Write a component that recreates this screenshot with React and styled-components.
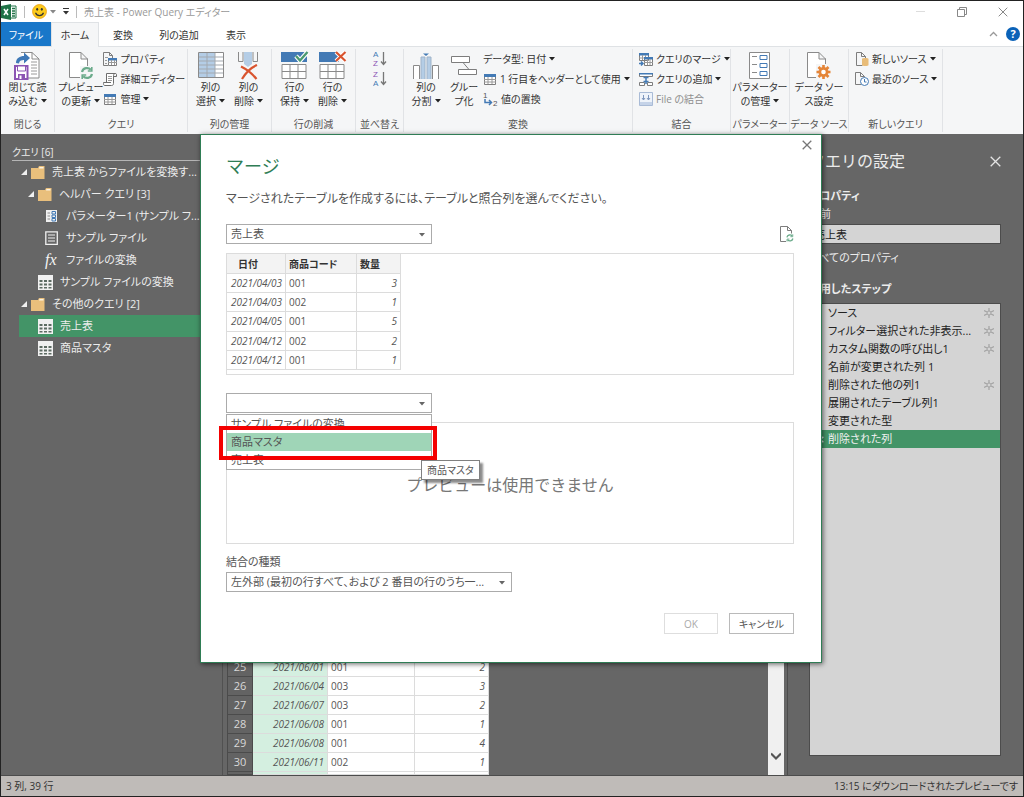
import { useState } from "react";
import styled, { createGlobalStyle } from "styled-components";

const GlobalStyle = createGlobalStyle`
  * {
    box-sizing: border-box;
  }

  body {
    margin: 0;
    font-family: "Open Sans", "Noto Sans CJK JP", sans-serif;
    font-size: 11px;
    line-height: 14px;
    font-feature-settings: "palt";
    color: #444;
  }

  button, input, select {
    font: inherit;
    font-feature-settings: inherit;
    color: inherit;
  }

  h1, h2, h3, p, ul {
    margin: 0;
    padding: 0;
    list-style: none;
  }
`;

/* ---------- data ---------- */

const tabs = ["ホーム", "変換", "列の追加", "表示"];

const queries = [
  { id: 1, level: 0, icon: "folder", open: true, name: "売上表 からファイルを変換す..." },
  { id: 2, level: 1, icon: "folder", open: true, name: "ヘルパー クエリ [3]" },
  { id: 3, level: 2, icon: "param", name: "パラメーター1 (サンプル フ..." },
  { id: 4, level: 2, icon: "file", name: "サンプル ファイル" },
  { id: 5, level: 2, icon: "fx", name: "ファイルの変換" },
  { id: 6, level: 1, icon: "table", name: "サンプル ファイルの変換" },
  { id: 7, level: 0, icon: "folder", open: true, name: "その他のクエリ [2]" },
  { id: 8, level: 1, icon: "table", name: "売上表" },
  { id: 9, level: 1, icon: "table", name: "商品マスタ" },
];

const gridRows = [
  { no: 25, date: "2021/06/01", code: "001", qty: 2 },
  { no: 26, date: "2021/06/04", code: "003", qty: 3 },
  { no: 27, date: "2021/06/07", code: "003", qty: 2 },
  { no: 28, date: "2021/06/08", code: "001", qty: 1 },
  { no: 29, date: "2021/06/08", code: "001", qty: 4 },
  { no: 30, date: "2021/06/11", code: "002", qty: 1 },
];

const previewRows = [
  { id: 1, date: "2021/04/03", code: "001", qty: 3 },
  { id: 2, date: "2021/04/03", code: "002", qty: 1 },
  { id: 3, date: "2021/04/05", code: "001", qty: 5 },
  { id: 4, date: "2021/04/12", code: "002", qty: 2 },
  { id: 5, date: "2021/04/12", code: "001", qty: 1 },
];

const steps = [
  { name: "ソース", gear: true },
  { name: "フィルター選択された非表示...", gear: true },
  { name: "カスタム関数の呼び出し1", gear: true },
  { name: "名前が変更された列 1" },
  { name: "削除された他の列1", gear: true },
  { name: "展開されたテーブル列1" },
  { name: "変更された型" },
  { name: "削除された列" },
];

const mergeTargets = ["サンプル ファイルの変換", "商品マスタ", "売上表"];

/* ---------- icons ---------- */

const Svg = styled.svg`
  display: block;
  flex: none;
  fill: none;
`;

const Icon = ({ w, h, children }) => (
  <Svg width={w} height={h} viewBox={`0 0 ${w} ${h}`} aria-hidden="true">
    {children}
  </Svg>
);

const Caret = ({ color = "#222" }) => (
  <Icon w={6} h={4}>
    <path d="M0 0h6L3 3.5z" fill={color} />
  </Icon>
);

const Cross = ({ size = 10, color = "#777", width = 1.3 }) => (
  <Icon w={size} h={size}>
    <path
      d={`M.7 .7L${size - 0.7} ${size - 0.7}M${size - 0.7} .7L.7 ${size - 0.7}`}
      stroke={color}
      strokeWidth={width}
    />
  </Icon>
);

const ExcelIcon = () => (
  <Icon w={16} h={16}>
    <path d="M9 2h6v12H9z" fill="#fff" stroke="#1f7246" />
    <path d="M11 4.500h3M11 7h3M11 9.500h3M11 12h3" stroke="#1f7246" strokeWidth="1.300" />
    <path d="M0 2l10-2v16L0 14z" fill="#1f7246" />
    <path d="M3 5l4 6M7 5l-4 6" stroke="#fff" strokeWidth="1.500" />
  </Icon>
);

const SmileIcon = () => (
  <Icon w={15} h={15}>
    <circle cx="7.500" cy="7.500" r="6.900" fill="#fccb1b" stroke="#eda71c" />
    <ellipse cx="5.200" cy="5.300" rx="1" ry="1.400" fill="#333" />
    <ellipse cx="9.800" cy="5.300" rx="1" ry="1.400" fill="#333" />
    <path d="M3.500 8.800c1.500 3.800 6.500 3.800 8 0" stroke="#333" strokeWidth="1.200" />
  </Icon>
);

const Page = ({ w = 18, h = 25, fold = 7 }) => (
  <path
    d={`M.5 .5H${w - fold}L${w - 0.5} ${fold}V${h - 0.5}H.5zM${w - fold} .5V${fold}H${w}`}
    fill="#fff"
    stroke="#8a8a8a"
  />
);

const Refresh = () => (
  <g stroke="#6bab8b" strokeWidth="2.200">
    <path d="M1.500 5.500C2.500 1 8 .5 10.300 3.300M11.500 7.500C10.500 12 5 12.500 2.700 9.700" />
    <path d="M11.300 .5v4h-4M1.700 12.500v-4h4" strokeWidth="1.600" />
  </g>
);

const CloseLoadIcon = () => (
  <Icon w={26} h={29}>
    <path d="M7 1.500h11l7 6.500v19H14" fill="#fff" stroke="#8a8a8a" />
    <path d="M18 1.500V8h7" stroke="#8a8a8a" />
    <path d="M17 11h6M17 14h6M17 17h6M17 20h6M17 23h6" stroke="#9a9a9a" />
    <path d="M2 12c0-5 4-7 8-7V1.500l6 5.500-6 5.500V9C7 9 5 10 5 12.500z" fill="#3f79b7" />
    <path d="M1 15h12.500v13H1z" fill="#fff" stroke="#8b54b3" strokeWidth="2" />
    <path d="M3.500 15h8v5h-8z" fill="#fff" stroke="#8b54b3" />
    <path d="M4 23h7v5H4z" fill="#8b54b3" />
    <path d="M5.500 24.500h2V28h-2z" fill="#fff" />
  </Icon>
);

const RefreshPreviewIcon = () => (
  <Icon w={26} h={29}>
    <g transform="translate(1 1)">
      <Page w={19} h={26} />
    </g>
    <path d="M12 15h14v14H12z" fill="#f5f6f7" />
    <g transform="translate(12.500 15.500)">
      <Refresh />
    </g>
  </Icon>
);

const ChooseColumnsIcon = () => (
  <Icon w={26} h={29}>
    <path d="M1 2h24v24H1z" fill="#fff" />
    <path d="M1 2h16v24H1z" fill="#b4cde6" />
    <path d="M1 6h24M1 10h24M1 14h24M1 18h24M1 22h24M9 2v24M17 2v24" stroke="#a3a9b0" />
    <path d="M.5 1.500h25v25H.5z" stroke="#8a8a8a" />
  </Icon>
);

const RemoveColumnsIcon = () => (
  <Icon w={24} h={29}>
    <path d="M1.500 1v9.500H6V1M20.500 1v9.500H16V1" stroke="#8a8a8a" />
    <path d="M7 1h8v12l-4 3-4-3z" fill="#b4cde6" />
    <path d="M4 15.500c6 3 12 8 15.500 12.500M20 14C13 17 8 23 5 28" stroke="#d9542f" strokeWidth="2.200" />
  </Icon>
);

const RowGrid = () => (
  <g>
    <path d="M0 1h26v10H0z" fill="#437ab5" />
    <path d="M1 13.500h24v14H1z" fill="#fff" stroke="#8a8a8a" />
    <path d="M1 20.500h24M9 13.500v14M17 13.500v14" stroke="#8a8a8a" />
  </g>
);

const KeepRowsIcon = () => (
  <Icon w={28} h={29}>
    <RowGrid />
    <path d="M15 5l4 4.500L26.500 1" stroke="#fff" strokeWidth="4.500" />
    <path d="M15 5l4 4.500L26.500 1" stroke="#4b9a71" strokeWidth="2.400" />
  </Icon>
);

const RemoveRowsIcon = () => (
  <Icon w={28} h={29}>
    <RowGrid />
    <path d="M20 1h7v10h-7z" fill="#f5f6f7" />
    <path d="M17 1l9.500 9M26.500 1L17 10" stroke="#fff" strokeWidth="4" />
    <path d="M17 1l9.500 9M26.500 1L17 10" stroke="#d9542f" strokeWidth="2.200" />
  </Icon>
);

const Letter = styled.text`
  font: 8px "Liberation Sans", sans-serif;
  fill: ${(props) => props.$color};
`;

const SortIcon = ({ top, bottom }) => (
  <Icon w={14} h={20}>
    <Letter x="0" y="8" $color={top === "A" ? "#437ab5" : "#8b54b3"}>{top}</Letter>
    <Letter x="0" y="17" $color={bottom === "A" ? "#437ab5" : "#8b54b3"}>{bottom}</Letter>
    <path d="M10.500 3v12.500M8 12.500l2.500 3 2.500-3" stroke="#777" strokeWidth="1.300" />
  </Icon>
);

const SplitIcon = () => (
  <Icon w={26} h={29}>
    <path d="M.5 28V14.500h6V28M19.500 28V14.500h6V28" fill="#fff" stroke="#8a8a8a" />
    <path d="M8 28V6h4v22M14 28V6h4v22" fill="#b4cde6" stroke="#9fb3c8" />
    <path d="M10 2.500h6L13 5z" fill="#437ab5" />
  </Icon>
);

const GroupIcon = () => (
  <Icon w={26} h={29}>
    <path d="M.5 5.500h18v6H.5zM7.500 18.500h18v5h-18z" fill="#fff" stroke="#7d7d7d" />
    <path d="M12 11.500l6 7" stroke="#7d7d7d" />
  </Icon>
);

const ParamsIcon = () => (
  <Icon w={22} h={29}>
    <path d="M.5 1.500h20v26H.5z" fill="#fff" stroke="#8a8a8a" />
    <path d="M11 4.500h7v4h-7zM11 12.500h7v4h-7zM11 20.500h7v4h-7z" stroke="#437ab5" />
    <path d="M3 5.500h5M3 13.500h5M3 21.500h5" stroke="#8a8a8a" />
  </Icon>
);

const Gear = ({ color, hole = "#fff" }) => (
  <g stroke={color}>
    <path d="M7 0v14M0 7h14M2 2l10 10M12 2L2 12" strokeWidth="2.600" />
    <circle cx="7" cy="7" r="4.500" fill={color} />
    <circle cx="7" cy="7" r="2.300" fill={hole} stroke="none" />
  </g>
);

const SourceSettingsIcon = () => (
  <Icon w={24} h={29}>
    <g transform="translate(0 1)">
      <Page w={19} h={26} />
    </g>
    <path d="M9 13h15v16H9z" fill="#f5f6f7" />
    <g transform="translate(9.500 14)">
      <Gear color="#e58538" />
    </g>
  </Icon>
);

const PropertiesIcon = () => (
  <Icon w={14} h={14}>
    <path d="M.5 .5h6l3 3v3M.5 .5v13H5M6.500 .5v3h3" stroke="#7d7d7d" />
    <path d="M2 5.500h3M2 8.500h2M2 11.500h2" stroke="#9a9a9a" />
    <path d="M5.500 6.500h8v7h-8z" fill="#fff" stroke="#7d7d7d" />
    <path d="M5 6h9v2.500H5z" fill="#437ab5" />
    <path d="M5 10.500h9M8.500 8v5M11.500 8v5" stroke="#9a9a9a" />
  </Icon>
);

const EditorIcon = () => (
  <Icon w={14} h={14}>
    <path d="M3.500 10.500v-9h9c-1.500 0-2 1-2 2v8c0 1.500-1 2-2 2h-7c-1 0-1-2-1-3h7.500" fill="#fff" stroke="#6d6d6d" />
    <path d="M10.500 4.500h3v-2c0-1-1-1-1-1" stroke="#6d6d6d" />
    <path d="M5 4.500h4M5 6.500h4M5 8.500h4" stroke="#9a9a9a" />
  </Icon>
);

const SmallTableIcon = () => (
  <Icon w={14} h={14}>
    <path d="M1.500 2.500h11v10h-11z" fill="#fff" stroke="#7d7d7d" />
    <path d="M1 2h12v3H1z" fill="#437ab5" />
    <path d="M1 7.500h12M1 10h12M5 5v7M9 5v7" stroke="#9a9a9a" />
  </Icon>
);

const ReplaceIcon = () => (
  <Icon w={15} h={18}>
    <Letter x="0" y="8" $color="#555">1</Letter>
    <path d="M2 9v3.500h6M6 10l2.500 2.500L6 15" stroke="#437ab5" strokeWidth="1.500" />
    <Letter x="10" y="16" $color="#555">2</Letter>
  </Icon>
);

const MergeIcon = () => (
  <Icon w={14} h={14}>
    <path d="M.5 1.500h9v7h-9zM5.500 5.500h8v8h-8z" fill="#fff" stroke="#7d7d7d" />
    <path d="M0 1h10v2.500H0zM5 5h9v2.500H5z" fill="#437ab5" />
    <path d="M3.500 3v5M6.500 3v2M0 6h5M8.500 7v6M11 7v6M5 10.500h9" stroke="#9a9a9a" />
    <path d="M0 11.500h3.500M2 9.500l2 2-2 2" stroke="#437ab5" strokeWidth="1.500" />
  </Icon>
);

const AppendIcon = () => (
  <Icon w={14} h={14}>
    <path d="M.5 1.500h13v3H.5zM.5 10.500h5v3h-5zM8.500 10.500h5v3h-5z" fill="#fff" stroke="#7d7d7d" />
    <path d="M0 1h14v1.500H0z" fill="#437ab5" />
    <path d="M7 5v7M4.500 5.500h5M4.500 9.500h5" stroke="#437ab5" strokeWidth="1.500" />
  </Icon>
);

const CombineIcon = () => (
  <Icon w={14} h={14}>
    <path d="M.5 .5h13v13H.5z" fill="#eef3fa" stroke="#a9bbd6" />
    <path d="M4.500 3v5M9.500 3v5M3 6l1.500 2L6 6M8 6l1.500 2L11 6" stroke="#7f97bd" />
    <path d="M1 10h12v3H1z" fill="#c5d3e8" />
  </Icon>
);

const NewSourceIcon = () => (
  <Icon w={14} h={14}>
    <path d="M7.500 13.500h-6V.5h5l4 4v2M6.500 .5v4h4" stroke="#7d7d7d" />
    <path d="M7 7c0-1.300 6.500-1.300 6.500 0v6c0 1.300-6.500 1.300-6.500 0z" fill="#e8bc78" />
  </Icon>
);

const RecentSourceIcon = () => (
  <Icon w={14} h={14}>
    <path d="M6 12.500H.5V.5h5l4 4v1M5.500 .5v4h4" stroke="#7d7d7d" />
    <circle cx="9.500" cy="9.500" r="4" fill="#fff" stroke="#437ab5" />
    <path d="M9.500 7v3h2" stroke="#437ab5" />
  </Icon>
);

const FolderIcon = () => (
  <Icon w={14} h={13}>
    <path d="M0 2h7l1-2h5.500v13H0z" fill="#e9bf7c" />
    <path d="M8.500 1h4v1.500H8z" fill="#fdf3e0" />
  </Icon>
);

const TreeTableIcon = () => (
  <Icon w={15} h={15}>
    <path d="M0 0h15v15H0z" fill="#f0f0f0" />
    <path d="M1.500 5h3v2h-3zM6 5h3v2H6zM10.500 5h3v2h-3zM1.500 8.500h3v2h-3zM6 8.500h3v2H6zM10.500 8.500h3v2h-3zM1.500 12h3v1.500h-3zM6 12h3v1.500H6zM10.500 12h3v1.500h-3z" fill="#5c6b62" />
  </Icon>
);

const TreeParamIcon = () => (
  <Icon w={14} h={14}>
    <path d="M1 1h11v12H1z" fill="#f0f0f0" />
    <path d="M7 2.500h3.500V5H7zM7 6h3.500v2.500H7zM7 9.500h3.500V12H7z" stroke="#437ab5" />
    <path d="M2.500 4h2.500M2.500 7h2.500M2.500 10h2.500" stroke="#8a8a8a" />
  </Icon>
);

const TreeFileIcon = () => (
  <Icon w={14} h={14}>
    <path d="M.8 .8h11.500v12.500H.8z" stroke="#f0f0f0" strokeWidth="1.300" />
    <path d="M3 4h7M3 7h7M3 10h7" stroke="#f0f0f0" />
  </Icon>
);

const Fx = styled.span`
  width: 14px;
  flex: none;
  font: italic 16px/16px "Liberation Serif", serif;
  color: #f4f4f4;
`;

const treeIcons = {
  folder: <FolderIcon />,
  table: <TreeTableIcon />,
  param: <TreeParamIcon />,
  file: <TreeFileIcon />,
  fx: <Fx>fx</Fx>,
};

const SmallGear = () => (
  <Icon w={10} h={10}>
    <path d="M5 0v3M5 7v3M0 2.500l3 1.500M7 6l3 1.500M10 2.500L7 4M3 6L0 7.500" stroke="#a3a3a3" strokeWidth="1.200" />
    <circle cx="5" cy="5" r="2" stroke="#a3a3a3" />
  </Icon>
);

/* ---------- window chrome ---------- */

const Window = styled.div`
  min-height: 100vh;
  display: flex;
  flex-direction: column;
  border: 1px solid #222;
  background-color: #fff;
`;

const TitleBar = styled.header`
  height: 21px;
  display: flex;
  align-items: center;
  gap: 7px;
  color: #999;
  font-size: 10px;
`;

const Divider = styled.span`
  width: 1px;
  height: 12px;
  background-color: #bbb;
`;

const PlainButton = styled.button`
  display: flex;
  align-items: center;
  justify-content: center;
  gap: 3px;
  padding: 0;
  border: 0;
  background: none;
  cursor: pointer;
`;

const WindowButtons = styled.div`
  margin-left: auto;
  display: flex;

  button {
    width: 41px;
    height: 20px;
  }
`;

const TabBar = styled.nav`
  height: 24px;
  display: flex;
  align-items: stretch;
  padding-right: 3px;
`;

const Tab = styled.button`
  min-width: ${(props) => props.$width}px;
  padding: 0;
  border: 1px solid transparent;
  border-bottom: 0;
  background: none;
  cursor: pointer;
  font-size: 10px;
  color: #333;

  ${(props) =>
    props.$active &&
    `
    border-color: #dfe2e5;
    background-color: #f5f6f7;
    margin-bottom: -1px;
    z-index: 1;
  `}
`;

const FileTab = styled(Tab)`
  background-color: #1977c9;
  color: #fff;
`;

const TabTools = styled.div`
  margin-left: auto;
  display: flex;
  align-items: center;
  gap: 8px;
`;

const Help = styled.button`
  width: 14px;
  height: 14px;
  padding: 0;
  border: 0;
  border-radius: 50%;
  background-color: #0b62b8;
  color: #fff;
  font-weight: bold;
  line-height: 14px;
`;

const Ribbon = styled.section`
  height: 88px;
  flex: none;
  display: flex;
  padding-top: 2px;
  background-color: #f5f6f7;
  border-top: 1px solid #dfe2e5;
`;

const Group = styled.div`
  width: ${(props) => props.$width}px;
  flex: none;
  display: flex;
  flex-direction: column;
  margin-bottom: 2px;
  border-right: 1px solid #e1e3e6;
  white-space: nowrap;
`;

const GroupBody = styled.div`
  flex: 1;
  display: flex;
  justify-content: ${(props) => (props.$start ? "flex-start" : "center")};
  padding-left: ${(props) => (props.$start ? "3px" : 0)};
`;

const GroupLabel = styled.div`
  height: 16px;
  text-align: center;
  font-size: 10px;
  line-height: 16px;
  color: #555;
`;

const BigButton = styled.button`
  min-width: 38px;
  display: flex;
  flex-direction: column;
  align-items: center;
  padding: 2px 0 0;
  border: 0;
  background: none;
  font-size: 10px;
  line-height: 14px;
  color: #333;
  cursor: pointer;
`;

const BigLabel = styled.span`
  display: flex;
  align-items: center;
  gap: 3px;
`;

const Stack = styled.div`
  display: flex;
  flex-direction: column;
  padding-left: ${(props) => props.$indent || 0}px;
`;

const SmallButton = styled(PlainButton)`
  height: 20px;
  justify-content: flex-start;
  font-size: 10px;
  color: ${(props) => (props.disabled ? "#8e8e8e" : "#333")};
`;

const Big = ({ icon, lines, menu }) => (
  <BigButton>
    {icon}
    <span>{lines[0]}</span>
    <BigLabel>
      {lines[1]}
      {menu && <Caret />}
    </BigLabel>
  </BigButton>
);

const Small = ({ icon, label, menu, disabled }) => (
  <SmallButton disabled={disabled}>
    {icon}
    {label}
    {menu && <Caret />}
  </SmallButton>
);

/* ---------- workspace ---------- */

const Workspace = styled.main`
  flex: 1;
  position: relative;
  display: flex;
  min-height: 641px;
  background-color: #666;
  border-bottom: 1px solid #4c4c4c;
`;

const QueryPane = styled.aside`
  width: 222px;
  flex: none;
  padding: 11px 0 0 11px;
  border-right: 1px solid #515151;
  color: #ececec;
  white-space: nowrap;
  overflow: hidden;
`;

const PaneHeading = styled.h2`
  height: 16px;
  font-size: 10px;
  font-weight: normal;
  line-height: 14px;
  border-bottom: 1px solid #b5b5b5;
`;

const QueryRow = styled.li`
  height: 22px;
  display: flex;
  align-items: center;
  gap: 7px;
  margin-left: 7px;
  padding-left: ${(props) => 2 + props.$level * 7}px;
  background-color: ${(props) => (props.$selected ? "#439467" : "transparent")};
  cursor: pointer;
`;

const ArrowSlot = styled.span`
  width: 10px;
  margin-right: -7px;
`;

const GridPane = styled.section`
  flex: 1;
  display: flex;
  align-items: flex-end;
  justify-content: space-between;
  margin-left: 4px;
`;

const DataTable = styled.table`
  border-collapse: separate;
  border-spacing: 0;
  table-layout: fixed;
  width: 262px;
  background-color: #fff;
  color: #555;
`;

const GridCell = styled.td`
  width: ${(props) => props.$width}px;
  height: ${(props) => (props.$stub ? 3 : 19)}px;
  padding: 0 3px;
  border-right: 1px solid #dcdcdc;
  border-bottom: 1px solid #dcdcdc;
  font-size: 10px;
  line-height: 14px;
  text-align: ${(props) => (props.$right ? "right" : "left")};
  font-style: ${(props) => (props.$right ? "italic" : "normal")};
  background-color: ${(props) => (props.$tint ? "#d4efe0" : "#fff")};
`;

const RowNumber = styled.th`
  width: 26px;
  padding: 0;
  border: 1px solid #4b4b4b;
  border-width: 0 1px 1px 1px;
  background-color: #636363;
  color: #d9d9d9;
  font-weight: normal;
  line-height: 14px;
`;

const ScrollBar = styled.div`
  width: 16px;
  align-self: stretch;
  display: flex;
  flex-direction: column;
  justify-content: flex-end;
  padding-bottom: 14px;
  margin-right: 3px;
  background-color: #f0f0f0;
`;

const SettingsPane = styled.aside`
  width: 236px;
  flex: none;
  display: flex;
  flex-direction: column;
  padding: 15px 22px 19px 21px;
  border-left: 1px solid #4c4c4c;
  color: #ececec;
`;

const SettingsHeader = styled.div`
  display: flex;
  align-items: center;
  justify-content: space-between;
  height: 24px;
  margin-bottom: 15px;

  h2 {
    font-size: 16px;
    font-weight: normal;
    font-feature-settings: normal;
    line-height: 20px;
  }
`;

const SectionTitle = styled.h3`
  font-size: 11px;
  line-height: 16px;
`;

const NameLabel = styled.label`
  height: 20px;
  line-height: 20px;
`;

const NameInput = styled.input`
  height: 20px;
  padding: 0 4px;
  border: 1px solid #4c4c4c;
  background-color: #d4d4d4;
  color: #222;
`;

const PropsLink = styled.a`
  margin: 6px 0 15px;
  line-height: 16px;
  color: inherit;
  text-decoration: none;
`;

const StepList = styled.ul`
  flex: 1;
  margin-top: 6px;
  border: 1px solid #4c4c4c;
  background-color: #d4d4d4;
  color: #222;
`;

const Step = styled.li`
  height: 18px;
  display: flex;
  align-items: center;
  padding-right: 6px;
  color: ${(props) => (props.$selected ? "#f0f0f0" : "#222")};
  background-color: ${(props) => (props.$selected ? "#439467" : "transparent")};
  white-space: nowrap;
  cursor: pointer;
`;

const StepMark = styled.span`
  width: 18px;
  padding-left: 7px;
`;

const StepName = styled.span`
  flex: 1;
`;

const StatusBar = styled.footer`
  height: 20px;
  display: flex;
  align-items: center;
  justify-content: space-between;
  padding: 0 5px;
  background-color: #bfbbb8;
  color: #333;
  font-size: 10px;
`;

/* ---------- merge dialog ---------- */

const Overlay = styled.div`
  position: absolute;
  inset: 0;
  display: flex;
  align-items: flex-start;
  justify-content: center;
  padding-right: 2px;
`;

const Dialog = styled.div`
  width: 622px;
  display: flex;
  flex-direction: column;
  padding: 3px 27px 28px 25px;
  border: 1px solid #2f7d55;
  background-color: #fff;
  box-shadow: 1px 1px 5px rgba(0, 0, 0, 0.6);
  color: #555;
`;

const DialogClose = styled(PlainButton)`
  align-self: flex-end;
  width: 14px;
  height: 14px;
  margin-right: -20px;
`;

const DialogTitle = styled.h1`
  margin-bottom: 9px;
  font-size: 18px;
  font-weight: normal;
  font-feature-settings: normal;
  line-height: 28px;
  color: #2f7d55;
`;

const DialogText = styled.p`
  margin-bottom: 15px;
  font-size: 12px;
  line-height: 20px;
`;

const FieldRow = styled.div`
  display: flex;
  align-items: center;
  justify-content: space-between;
`;

const SelectBox = styled.div`
  position: relative;
  width: ${(props) => props.$width}px;

  > svg {
    position: absolute;
    right: 7px;
    top: 9px;
    pointer-events: none;
  }
`;

const SelectField = styled.select`
  display: block;
  appearance: none;
  width: 100%;
  height: 20px;
  padding: 0 20px 0 4px;
  border: 1px solid #ababab;
  border-radius: 0;
  background-color: #fff;
  text-overflow: ellipsis;
`;

const PreviewBox = styled.div`
  height: 122px;
  display: flex;
  margin: 9px 0 ${(props) => props.$after}px;
  border: 1px solid #dcdcdc;
`;

const PreviewTable = styled(DataTable)`
  width: 174px;
  height: 116px;
`;

const PreviewHead = styled.th`
  width: ${(props) => props.$width}px;
  height: 20px;
  padding: 0 3px;
  border-right: 1px solid #dcdcdc;
  border-bottom: 1px solid #dcdcdc;
  background-color: #f3f3f3;
  text-align: left;
  font-size: 10px;
  color: #333;

  &:first-child {
    padding-left: 11px;
  }
`;

const EmptyMessage = styled.p`
  margin: auto;
  padding-top: 3px;
  font-size: 16px;
  font-feature-settings: normal;
  line-height: 20px;
  color: #777;
`;

const Options = styled.ul`
  position: absolute;
  top: 21px;
  left: 0;
  right: 0;
  border: 1px solid #ababab;
  background-color: #fff;
`;

const Option = styled.li`
  height: 18px;
  padding-left: 4px;
  line-height: 18px;
  background-color: ${(props) => (props.$active ? "#9fd5b7" : "#fff")};
`;

const Highlight = styled.div`
  position: absolute;
  top: 33px;
  left: -7px;
  right: -5px;
  height: 34px;
  border: 4px solid #f40000;
  pointer-events: none;
`;

const Tooltip = styled.div`
  position: absolute;
  top: 67px;
  left: 195px;
  padding: 2px 5px;
  border: 1px solid #808080;
  background-color: #fff;
  box-shadow: 3px 3px 2px rgba(0, 0, 0, 0.45);
  font-size: 10px;
  white-space: nowrap;
`;

const JoinLabel = styled.label`
  margin-bottom: 2px;
  line-height: 16px;
`;

const Actions = styled.div`
  display: flex;
  justify-content: flex-end;
  gap: 11px;
  margin-top: 21px;
`;

const ActionButton = styled.button`
  width: ${(props) => props.$width}px;
  height: 21px;
  padding: 0;
  border: 1px solid #bababa;
  background-color: #fff;
  font-size: 10px;

  &:disabled {
    border-color: #dedede;
    color: #aaa;
  }
`;

const MergeDialog = () => {
  const [table, setTable] = useState("売上表");
  const [hovered, setHovered] = useState("商品マスタ");

  return (
    <Dialog role="dialog" aria-labelledby="merge-title">
      <DialogClose aria-label="閉じる">
        <Cross />
      </DialogClose>
      <DialogTitle id="merge-title">マージ</DialogTitle>
      <DialogText>
        マージされたテーブルを作成するには、テーブルと照合列を選んでください。
      </DialogText>
      <FieldRow>
        <SelectBox $width={206}>
          <SelectField
            aria-label="テーブル"
            value={table}
            onChange={(e) => setTable(e.target.value)}
          >
            {mergeTargets.map((name) => (
              <option key={name}>{name}</option>
            ))}
          </SelectField>
          <Caret color="#666" />
        </SelectBox>
        <PlainButton aria-label="プレビューの更新">
          <Icon w={14} h={16}>
            <path d="M6 15.500H.5V.5h7l4 4v3M7.500 .5v4h4" stroke="#7d7d7d" />
            <g transform="translate(6 8) scale(.6)">
              <Refresh />
            </g>
          </Icon>
        </PlainButton>
      </FieldRow>
      <PreviewBox $after={18}>
        <div>
          <PreviewTable>
            <thead>
              <tr>
                <PreviewHead $width={59}>日付</PreviewHead>
                <PreviewHead $width={71}>商品コード</PreviewHead>
                <PreviewHead $width={44}>数量</PreviewHead>
              </tr>
            </thead>
            <tbody>
              {previewRows.map((row) => (
                <tr key={row.id}>
                  <GridCell $right>{row.date}</GridCell>
                  <GridCell>{row.code}</GridCell>
                  <GridCell $right>{row.qty}</GridCell>
                </tr>
              ))}
            </tbody>
          </PreviewTable>
        </div>
      </PreviewBox>
      <SelectBox $width={206}>
        <SelectField aria-label="結合するテーブル" defaultValue="">
          <option value=""></option>
        </SelectField>
        <Caret color="#666" />
        <Options role="listbox">
          {mergeTargets.map((name) => (
            <Option
              key={name}
              role="option"
              aria-selected={hovered === name}
              $active={hovered === name}
              onMouseEnter={() => setHovered(name)}
            >
              {name}
            </Option>
          ))}
        </Options>
        <Highlight />
        <Tooltip role="tooltip">{hovered}</Tooltip>
      </SelectBox>
      <PreviewBox $after={10}>
        <EmptyMessage>プレビューは使用できません</EmptyMessage>
      </PreviewBox>
      <JoinLabel htmlFor="join-kind">結合の種類</JoinLabel>
      <SelectBox $width={286}>
        <SelectField id="join-kind">
          <option>左外部 (最初の行すべて、および 2 番目の行のうち一...</option>
        </SelectField>
        <Caret color="#666" />
      </SelectBox>
      <Actions>
        <ActionButton $width={54} disabled>
          OK
        </ActionButton>
        <ActionButton $width={65}>キャンセル</ActionButton>
      </Actions>
    </Dialog>
  );
};

const RibbonBar = () => (
  <Ribbon>
    <Group $width={54}>
      <GroupBody>
        <Big icon={<CloseLoadIcon />} lines={["閉じて読", "み込む"]} menu />
      </GroupBody>
      <GroupLabel>閉じる</GroupLabel>
    </Group>
    <Group $width={133}>
      <GroupBody $start>
        <Big icon={<RefreshPreviewIcon />} lines={["プレビュー", "の更新"]} menu />
        <Stack>
          <Small icon={<PropertiesIcon />} label="プロパティ" />
          <Small icon={<EditorIcon />} label="詳細エディター" />
          <Small icon={<SmallTableIcon />} label="管理" menu />
        </Stack>
      </GroupBody>
      <GroupLabel>クエリ</GroupLabel>
    </Group>
    <Group $width={84}>
      <GroupBody>
        <Big icon={<ChooseColumnsIcon />} lines={["列の", "選択"]} menu />
        <Big icon={<RemoveColumnsIcon />} lines={["列の", "削除"]} menu />
      </GroupBody>
      <GroupLabel>列の管理</GroupLabel>
    </Group>
    <Group $width={84}>
      <GroupBody>
        <Big icon={<KeepRowsIcon />} lines={["行の", "保持"]} menu />
        <Big icon={<RemoveRowsIcon />} lines={["行の", "削除"]} menu />
      </GroupBody>
      <GroupLabel>行の削減</GroupLabel>
    </Group>
    <Group $width={48}>
      <GroupBody>
        <Stack>
          <SmallButton aria-label="昇順で並べ替え">
            <SortIcon top="A" bottom="Z" />
          </SmallButton>
          <SmallButton aria-label="降順で並べ替え">
            <SortIcon top="Z" bottom="A" />
          </SmallButton>
        </Stack>
      </GroupBody>
      <GroupLabel>並べ替え</GroupLabel>
    </Group>
    <Group $width={229}>
      <GroupBody $start>
        <Big icon={<SplitIcon />} lines={["列の", "分割"]} menu />
        <Big icon={<GroupIcon />} lines={["グルー", "プ化"]} />
        <Stack>
          <Small label="データ型: 日付" menu />
          <Small icon={<SmallTableIcon />} label="1 行目をヘッダーとして使用" menu />
          <Small icon={<ReplaceIcon />} label="値の置換" />
        </Stack>
      </GroupBody>
      <GroupLabel>変換</GroupLabel>
    </Group>
    <Group $width={98}>
      <GroupBody $start>
        <Stack $indent={3}>
          <Small icon={<MergeIcon />} label="クエリのマージ" menu />
          <Small icon={<AppendIcon />} label="クエリの追加" menu />
          <Small icon={<CombineIcon />} label="File の結合" disabled />
        </Stack>
      </GroupBody>
      <GroupLabel>結合</GroupLabel>
    </Group>
    <Group $width={59}>
      <GroupBody>
        <Big icon={<ParamsIcon />} lines={["パラメーター", "の管理"]} menu />
      </GroupBody>
      <GroupLabel>パラメーター</GroupLabel>
    </Group>
    <Group $width={59}>
      <GroupBody>
        <Big icon={<SourceSettingsIcon />} lines={["データ ソー", "ス設定"]} />
      </GroupBody>
      <GroupLabel>データ ソース</GroupLabel>
    </Group>
    <Group $width={94}>
      <GroupBody $start>
        <Stack $indent={3}>
          <Small icon={<NewSourceIcon />} label="新しいソース" menu />
          <Small icon={<RecentSourceIcon />} label="最近のソース" menu />
        </Stack>
      </GroupBody>
      <GroupLabel>新しいクエリ</GroupLabel>
    </Group>
  </Ribbon>
);

const App = () => {
  const [activeTab, setActiveTab] = useState("ホーム");
  const [selectedQuery, setSelectedQuery] = useState(8);
  const [selectedStep, setSelectedStep] = useState("削除された列");
  const tabWidths = [48, 48, 64, 50];

  return (
    <>
      <GlobalStyle />
      <Window>
        <TitleBar>
          <ExcelIcon />
          <Divider />
          <PlainButton aria-label="フィードバック">
            <SmileIcon />
            <Caret color="#888" />
          </PlainButton>
          <PlainButton aria-label="クイック アクセス">
            <Icon w={6} h={7}>
              <path d="M0 .5h6" stroke="#333" />
              <path d="M0 3h6L3 6.500z" fill="#333" />
            </Icon>
          </PlainButton>
          <Divider />
          <span>売上表 - Power Query エディター</span>
          <WindowButtons>
            <PlainButton aria-label="最小化">
              <Icon w={9} h={9}>
                <path d="M0 4.500h9" stroke="#ddd" />
              </Icon>
            </PlainButton>
            <PlainButton aria-label="元に戻す">
              <Icon w={10} h={10}>
                <path d="M.5 2.500h7v7h-7zM2.500 2.500v-2h7v7h-2" stroke="#888" />
              </Icon>
            </PlainButton>
            <PlainButton aria-label="閉じる">
              <Cross color="#888" width={1} />
            </PlainButton>
          </WindowButtons>
        </TitleBar>
        <TabBar>
          <FileTab $width={50}>ファイル</FileTab>
          {tabs.map((name, i) => (
            <Tab
              key={name}
              $width={tabWidths[i]}
              $active={activeTab === name}
              onClick={() => setActiveTab(name)}
            >
              {name}
            </Tab>
          ))}
          <TabTools>
            <PlainButton aria-label="リボンを折りたたむ">
              <Icon w={9} h={6}>
                <path d="M1 5l3.500-3.500L8 5" stroke="#999" strokeWidth="1.300" />
              </Icon>
            </PlainButton>
            <Help>?</Help>
          </TabTools>
        </TabBar>
        <RibbonBar />
        <Workspace>
          <QueryPane>
            <PaneHeading>クエリ [6]</PaneHeading>
            <ul>
              {queries.map((q) => (
                <QueryRow
                  key={q.id}
                  $level={q.level}
                  $selected={q.id === selectedQuery}
                  onClick={() => setSelectedQuery(q.id)}
                >
                  <ArrowSlot>
                    {q.open && (
                      <Icon w={6} h={6}>
                        <path d="M6 0v6H0z" fill="#f0f0f0" />
                      </Icon>
                    )}
                  </ArrowSlot>
                  {treeIcons[q.icon]}
                  <span>{q.name}</span>
                </QueryRow>
              ))}
            </ul>
          </QueryPane>
          <GridPane>
            <DataTable>
              <tbody>
                {gridRows.map((row) => (
                  <tr key={row.no}>
                    <RowNumber scope="row">{row.no}</RowNumber>
                    <GridCell $width={75} $right $tint>{row.date}</GridCell>
                    <GridCell $width={87}>{row.code}</GridCell>
                    <GridCell $width={74} $right>{row.qty}</GridCell>
                  </tr>
                ))}
                <tr>
                  <RowNumber />
                  <GridCell $stub $tint />
                  <GridCell $stub />
                  <GridCell $stub />
                </tr>
              </tbody>
            </DataTable>
            <ScrollBar>
              <PlainButton aria-label="下へスクロール">
                <Icon w={10} h={9}>
                  <path d="M0 1.500L5 6.500l5-5" stroke="#555" strokeWidth="2.200" />
                </Icon>
              </PlainButton>
            </ScrollBar>
          </GridPane>
          <SettingsPane>
            <SettingsHeader>
              <h2>クエリの設定</h2>
              <PlainButton aria-label="閉じる">
                <Cross size={11} color="#e4e4e4" />
              </PlainButton>
            </SettingsHeader>
            <SectionTitle>プロパティ</SectionTitle>
            <NameLabel htmlFor="query-name">名前</NameLabel>
            <NameInput id="query-name" defaultValue="売上表" />
            <PropsLink href="#properties">すべてのプロパティ</PropsLink>
            <SectionTitle>適用したステップ</SectionTitle>
            <StepList>
              {steps.map((step) => (
                <Step
                  key={step.name}
                  $selected={step.name === selectedStep}
                  onClick={() => setSelectedStep(step.name)}
                >
                  <StepMark>
                    {step.name === selectedStep && <Cross size={7} color="#e4e4e4" />}
                  </StepMark>
                  <StepName>{step.name}</StepName>
                  {step.gear && <SmallGear />}
                </Step>
              ))}
            </StepList>
          </SettingsPane>
          <Overlay>
            <MergeDialog />
          </Overlay>
        </Workspace>
        <StatusBar>
          <span>3 列, 39 行</span>
          <span>13:15 にダウンロードされたプレビューです</span>
        </StatusBar>
      </Window>
    </>
  );
};

export default App;
